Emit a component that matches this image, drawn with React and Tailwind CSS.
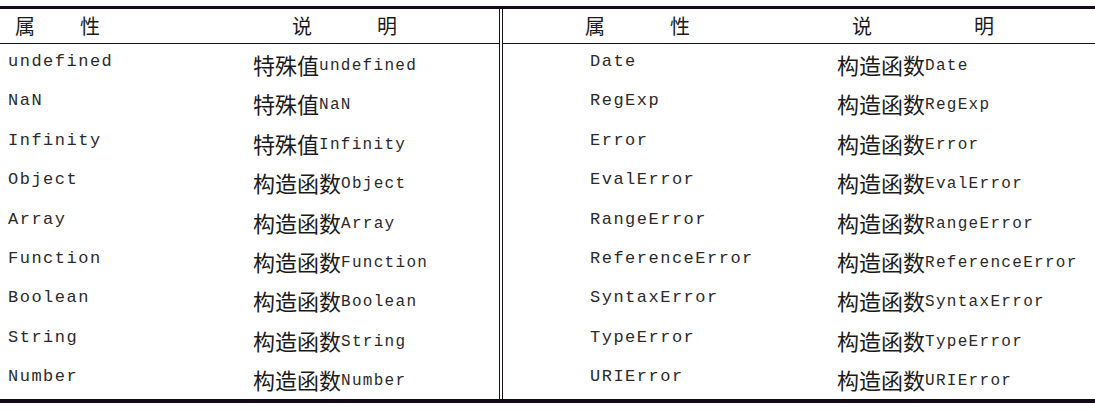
import React from "react";

const left = [
  ["undefined", "特殊值", "undefined"],
  ["NaN", "特殊值", "NaN"],
  ["Infinity", "特殊值", "Infinity"],
  ["Object", "构造函数", "Object"],
  ["Array", "构造函数", "Array"],
  ["Function", "构造函数", "Function"],
  ["Boolean", "构造函数", "Boolean"],
  ["String", "构造函数", "String"],
  ["Number", "构造函数", "Number"],
];

const right = [
  ["Date", "构造函数", "Date"],
  ["RegExp", "构造函数", "RegExp"],
  ["Error", "构造函数", "Error"],
  ["EvalError", "构造函数", "EvalError"],
  ["RangeError", "构造函数", "RangeError"],
  ["ReferenceError", "构造函数", "ReferenceError"],
  ["SyntaxError", "构造函数", "SyntaxError"],
  ["TypeError", "构造函数", "TypeError"],
  ["URIError", "构造函数", "URIError"],
];

const cjk = "font-['Noto_Sans_CJK_SC',sans-serif]";
const mono = "font-['Liberation_Mono','Courier_New',monospace]";

function Table({ rows, c1, c2, h1pad, h1gap, h2pad, h2gap, p1, p2 }) {
  return (
    <div className="flex flex-col" style={{ width: c1 + c2 }}>
      <div className={`flex h-[35px] items-center border-b border-[#1a1018] text-[20px] text-[#1a1a1a] ${cjk}`}>
        <div className="flex items-center" style={{ width: c1, paddingLeft: h1pad, gap: h1gap }}>
          <span>属</span>
          <span>性</span>
        </div>
        <div className="flex items-center" style={{ width: c2, paddingLeft: h2pad, gap: h2gap }}>
          <span>说</span>
          <span>明</span>
        </div>
      </div>
      {rows.map((r) => (
        <div key={r[0]} className="flex h-[39.4px] text-[#2a2a2a]">
          <div className={`pt-[6px] text-[17px] tracking-[1.5px] leading-[24px] ${mono}`} style={{ width: c1, paddingLeft: p1 }}>
            {r[0]}
          </div>
          <div className="flex items-end pt-[8px] h-[32px]" style={{ width: c2, paddingLeft: p2 }}>
            <span className={`text-[22px] leading-[24px] text-[#1a1a1a] ${cjk}`}>{r[1]}</span>
            <span className={`text-[16px] tracking-[1.3px] leading-[20px] ${mono}`}>{r[2]}</span>
          </div>
        </div>
      ))}
    </div>
  );
}

export default function App() {
  return (
    <div className="w-[1095px] h-[410px] bg-white pt-[6px]">
      <div className="flex border-t-[3px] border-b-[4px] border-[#140a14]">
        <Table rows={left} c1={245} c2={254} h1pad={15} h1gap={45} h2pad={47} h2gap={65} p1={8} p2={8} />
        <div className="w-[4px] border-x border-[#1a1018]" />
        <Table rows={right} c1={327} c2={265} h1pad={82} h1gap={65} h2pad={22} h2gap={102} p1={87} p2={7} />
      </div>
    </div>
  );
}
